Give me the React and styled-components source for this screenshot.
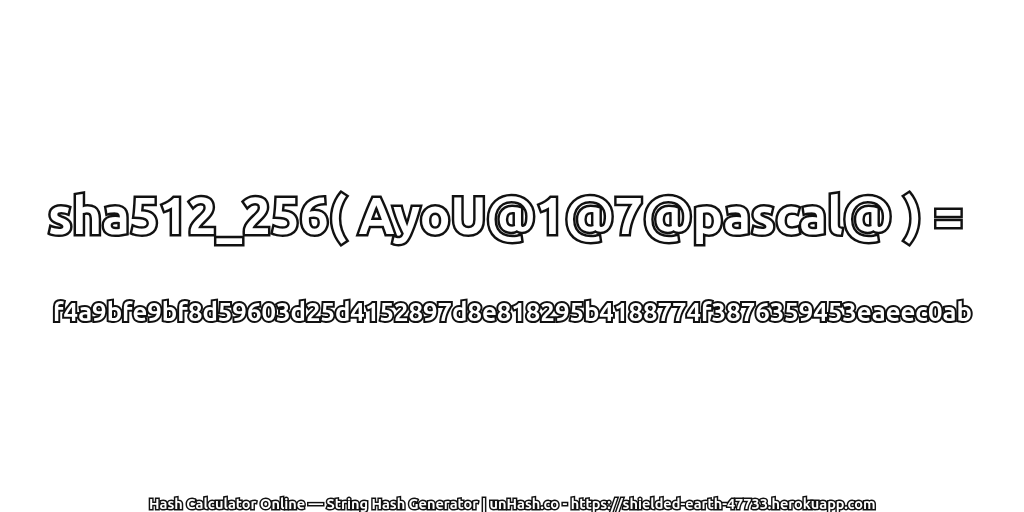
import React from 'react'
import styled, { createGlobalStyle } from 'styled-components'

const GlobalStyle = createGlobalStyle`
  html, body { margin: 0; padding: 0; background: #fff; }
  body { font-family: "Ubuntu", "Noto Sans", "Open Sans", sans-serif; }
`

const Page = styled.div`
  width: 1024px;
  height: 512px;
  display: flex;
  flex-direction: column;
  align-items: center;
  overflow: hidden;
`

const Title = styled.h1`
  margin: 185px 0 0;
  height: 60px;
  line-height: 60px;
  font-size: 51.2px;
  font-weight: 700;
  color: #fff;
  white-space: pre;
  -webkit-text-stroke: 5px #111;
  paint-order: stroke fill;
  will-change: transform;
`

const HashLine = styled.h2`
  margin: 52px 0 0;
  height: 30px;
  line-height: 30px;
  font-size: 25.75px;
  font-weight: 700;
  color: #fff;
  white-space: nowrap;
  -webkit-text-stroke: 4px #111;
  paint-order: stroke fill;
  will-change: transform;
`

const Footer = styled.div`
  margin-top: auto;
  height: 16px;
  line-height: 16px;
  font-size: 14.5px;
  font-weight: 700;
  color: #fff;
  white-space: nowrap;
  -webkit-text-stroke: 3px #111;
  paint-order: stroke fill;
  will-change: transform;
`

export default function App() {
  return (
    <Page>
      <GlobalStyle />
      <Title>{'sha512_256( AyoU@1@7@pascal@ ) = '}</Title>
      <HashLine>f4a9bfe9bf8d59603d25d4152897d8e818295b4188774f3876359453eaeec0ab</HashLine>
      <Footer>Hash Calculator Online — String Hash Generator | unHash.co - https://shielded-earth-47733.herokuapp.com</Footer>
    </Page>
  )
}
